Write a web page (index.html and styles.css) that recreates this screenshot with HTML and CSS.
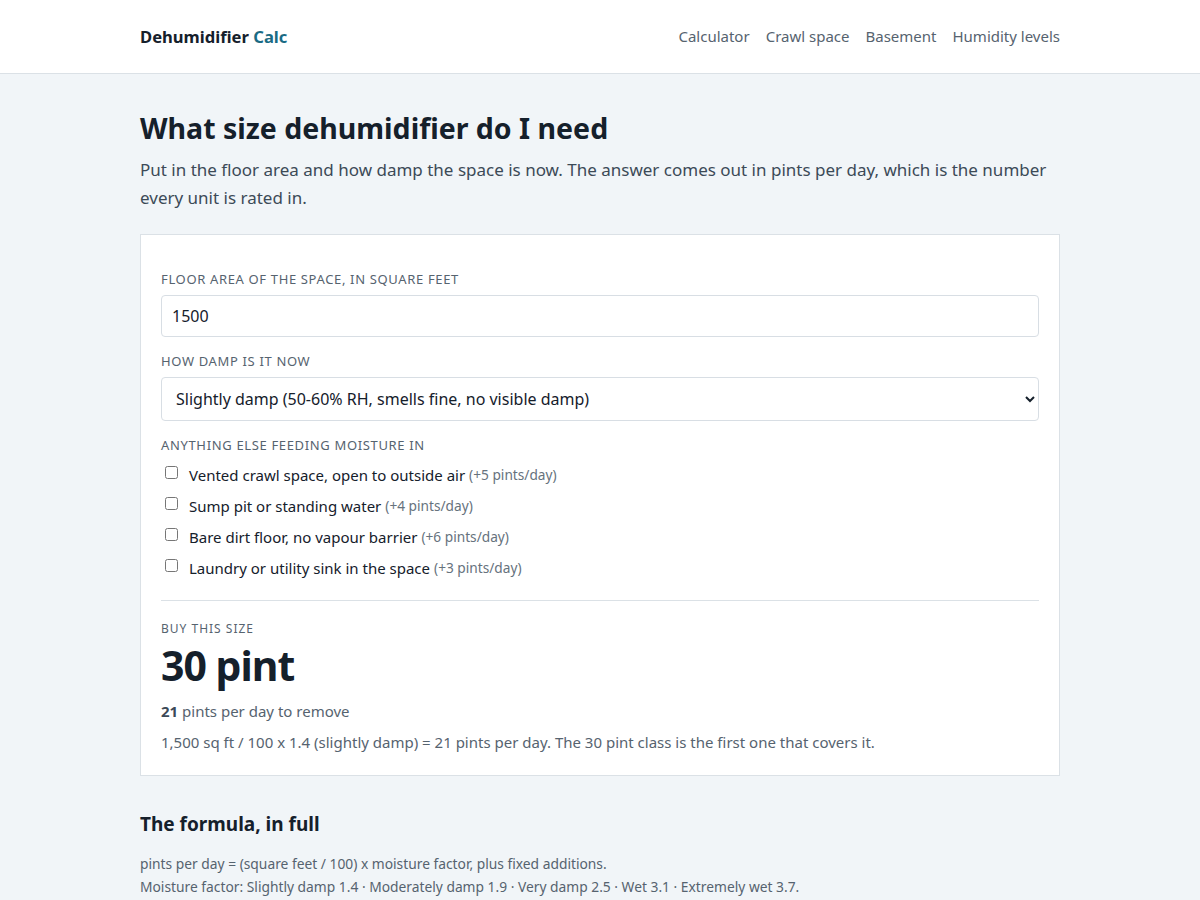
FILE: index.html
```html
<!DOCTYPE html>
<html lang="en">
<head>
<meta charset="utf-8">
<title>Dehumidifier Calc</title>
<link rel="stylesheet" href="styles.css">
</head>
<body>
<header class="site-header">
  <div class="wrap header-inner">
    <div class="brand">Dehumidifier <span class="brand-accent">Calc</span></div>
    <nav class="nav">
      <a href="#">Calculator</a>
      <a href="#">Crawl space</a>
      <a href="#">Basement</a>
      <a href="#">Humidity levels</a>
    </nav>
  </div>
</header>
<main class="wrap main">
  <h1 class="title">What size dehumidifier do I need</h1>
  <p class="lead">Put in the floor area and how damp the space is now. The answer comes out in pints per day, which is the number every unit is rated in.</p>
  <section class="card">
    <label class="field-label" for="area">Floor area of the space, in square feet</label>
    <input id="area" class="text-input" type="text" value="1500">
    <label class="field-label" for="damp">How damp is it now</label>
    <select id="damp" class="select">
      <option>Slightly damp (50-60% RH, smells fine, no visible damp)</option>
    </select>
    <div class="field-label">Anything else feeding moisture in</div>
    <ul class="checks">
      <li><label><input type="checkbox"> Vented crawl space, open to outside air <span class="muted">(+5 pints/day)</span></label></li>
      <li><label><input type="checkbox"> Sump pit or standing water <span class="muted">(+4 pints/day)</span></label></li>
      <li><label><input type="checkbox"> Bare dirt floor, no vapour barrier <span class="muted">(+6 pints/day)</span></label></li>
      <li><label><input type="checkbox"> Laundry or utility sink in the space <span class="muted">(+3 pints/day)</span></label></li>
    </ul>
    <div class="result">
      <div class="result-label">Buy this size</div>
      <div class="result-value">30 pint</div>
      <div class="result-sub"><strong>21</strong> pints per day to remove</div>
      <div class="result-sub">1,500 sq ft / 100 x 1.4 (slightly damp) = 21 pints per day. The 30 pint class is the first one that covers it.</div>
    </div>
  </section>
  <h2 class="formula-title">The formula, in full</h2>
  <p class="formula">pints per day = (square feet / 100) x moisture factor, plus fixed additions.<br>Moisture factor: Slightly damp 1.4 · Moderately damp 1.9 · Very damp 2.5 · Wet 3.1 · Extremely wet 3.7.</p>
</main>
</body>
</html>
```
FILE: styles.css
```css
* { box-sizing: border-box; }
html, body { margin: 0; padding: 0; }
body {
  background: #f1f5f8;
  font-family: "Noto Sans", "Open Sans", sans-serif;
  color: #15202b;
}
.wrap { width: 920px; margin: 0 auto; }
.site-header {
  background: #ffffff;
  border-bottom: 1px solid #dbe1e6;
  height: 74px;
}
.header-inner {
  height: 73px;
  display: flex;
  align-items: center;
  justify-content: space-between;
}
.brand { font-size: 16.6px; font-weight: 700; color: #15202b; }
.brand-accent { color: #1a6b84; }
.nav { display: flex; gap: 16px; margin-top: -2px; }
.nav a { color: #56636f; text-decoration: none; font-size: 15px; }
.main { padding-top: 34px; }
.title { font-size: 28.5px; font-weight: 700; margin: 0 0 8px; line-height: 40px; color: #15202b; }
.lead { font-size: 17px; line-height: 28px; color: #3c4a57; margin: 0 0 22px; }
.card {
  background: #fff;
  border: 1px solid #dbe1e6;
  padding: 35px 20px 17px;
}
.field-label {
  display: block;
  font-size: 13px;
  letter-spacing: 0.65px;
  text-transform: uppercase;
  color: #56636f;
  margin-bottom: 7px;
  line-height: 18px;
}
.text-input {
  display: block;
  width: 100%;
  height: 42px;
  border: 1px solid #d8dee4;
  border-radius: 4px;
  padding: 0 10px;
  font-family: inherit;
  font-size: 16px;
  color: #15202b;
  margin-bottom: 15px;
  background: #fff;
}
.select {
  display: block;
  width: 100%;
  height: 44px;
  border: 1px solid #d8dee4;
  border-radius: 4px;
  padding: 0 10px;
  font-family: inherit;
  font-size: 16px;
  color: #15202b;
  background: #fff;
  margin-bottom: 15px;
}
.checks { list-style: none; margin: 0; padding: 0 0 0 3px; margin-top: -2px; }
.checks li { height: 31px; display: flex; align-items: center; font-size: 15px; color: #15202b; }
.checks label { display: flex; align-items: center; }
.checks input { margin: 0 11px 0 1px; width: 13px; height: 13px; position: relative; top: -2px; }
.muted { color: #66727d; font-size: 13.7px; margin-left: 4px; }
.result {
  margin-top: 17px;
  border-top: 1px solid #dbe1e6;
  padding-top: 20px;
}
.result-label { font-size: 12px; letter-spacing: 1px; text-transform: uppercase; color: #56636f; line-height: 16px; }
.result-value { font-size: 41px; font-weight: 700; line-height: 56px; color: #15202b; letter-spacing: -1px; margin-bottom: 3px; }
.result-sub { font-size: 15px; color: #56636f; line-height: 31px; }
.result-sub strong { color: #3c4a57; }
.formula-title { font-size: 19px; font-weight: 700; margin: 34px 0 14px; line-height: 28px; }
.formula { font-size: 13.8px; line-height: 23px; color: #56636f; margin: 0; }
```
